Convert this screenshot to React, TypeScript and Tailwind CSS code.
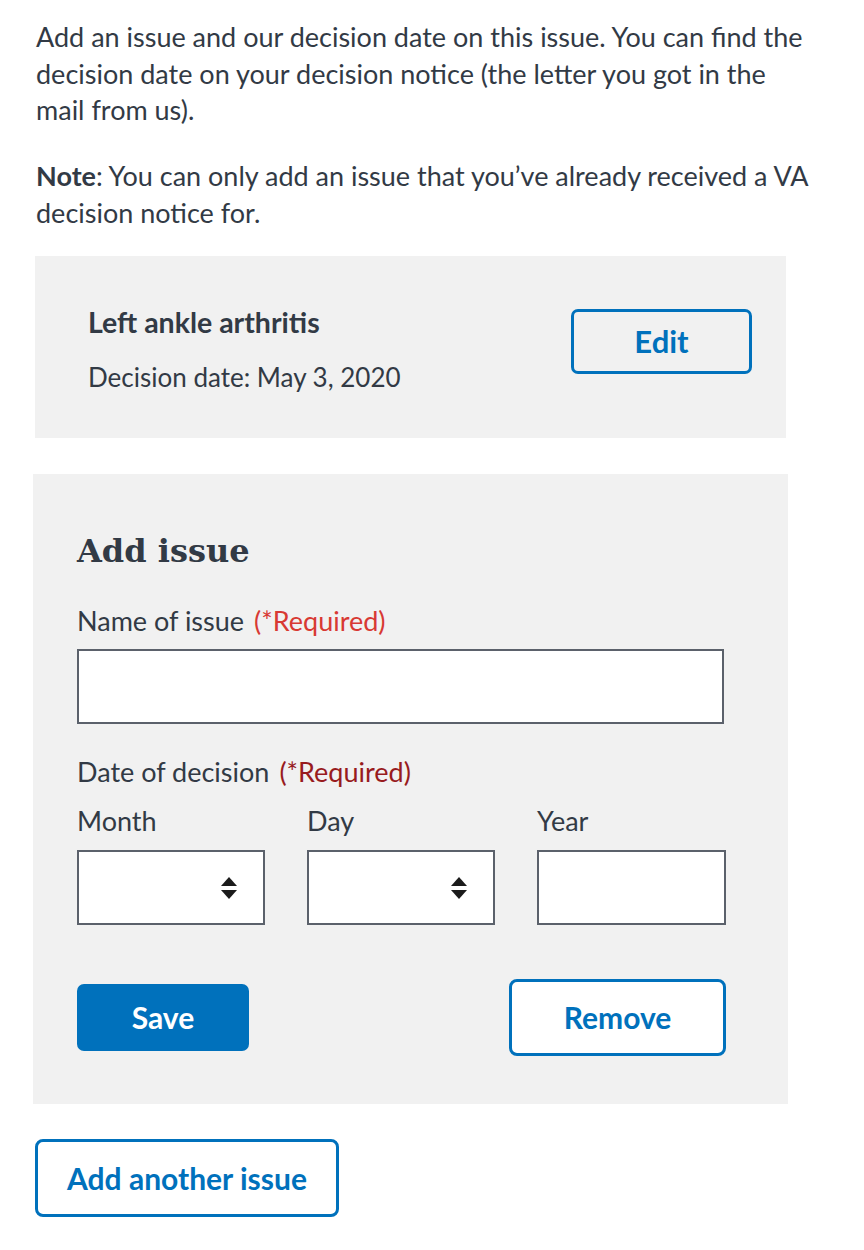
import React from "react";

const body = "font-['Lato',sans-serif] text-[#323a45]";

const SelectArrows: React.FC = () => (
  <svg
    width="18"
    height="24"
    viewBox="0 0 18 24"
    className="pointer-events-none absolute right-[27px] top-1/2 -translate-y-1/2"
  >
    <polygon points="9,1 17,10 1,10" fill="#1b1b1b" />
    <polygon points="1,14 17,14 9,23" fill="#1b1b1b" />
  </svg>
);

const DateSelect: React.FC<{ label: string }> = ({ label }) => (
  <div className="w-[188px]">
    <div className="text-[27px] leading-[36px]">{label}</div>
    <div className="relative mt-[11px]">
      <select
        aria-label={label}
        className="block h-[75px] w-full appearance-none rounded-none border-2 border-[#5b616b] bg-white"
      >
        <option value=""></option>
      </select>
      <SelectArrows />
    </div>
  </div>
);

const App: React.FC = () => {
  return (
    <div className={`${body} min-h-screen bg-white pb-10 pt-[19px]`}>
      {/* Intro */}
      <div className="ml-[36px] w-[800px] text-[27px] leading-[36.5px]">
        <p>
          Add an issue and our decision date on this issue. You can find the
          decision date on your decision notice (the letter you got in the
          <br />
          mail from us).
        </p>
        <p className="mt-[29.5px]">
          <strong className="font-bold">Note</strong>: You can only add an
          issue that you’ve already received a VA decision notice for.
        </p>
      </div>

      {/* Saved issue */}
      <div className="ml-[35px] mt-[25px] flex h-[182px] w-[751px] justify-between bg-[#f1f1f1] pl-[53px] pr-[34px]">
        <div className="pt-[51px]">
          <div className="text-[28.5px] font-bold leading-[30px]">
            Left ankle arthritis
          </div>
          <div className="mt-[22px] text-[26px] leading-[36px]">
            Decision date: May 3, 2020
          </div>
        </div>
        <div className="pt-[53px]">
          <button className="flex h-[65px] w-[181px] items-center justify-center rounded-[7px] border-[3px] border-[#0071bc] text-[31px] font-bold text-[#0071bc]">
            Edit
          </button>
        </div>
      </div>

      {/* Add issue form */}
      <div className="ml-[33px] mt-[36px] w-[755px] bg-[#f1f1f1] pb-[48px] pl-[44px] pt-[57px]">
        <h2 className="font-['DejaVu_Serif',serif] text-[32px] font-bold leading-[40px]">
          Add issue
        </h2>

        <label className="mt-[32px] block text-[27px] leading-[36px]">
          Name of issue
          <span className="ml-[10px] text-[#d83933]">(*Required)</span>
        </label>
        <input
          type="text"
          aria-label="Name of issue"
          className="mt-[10px] block h-[75px] w-[647px] border-2 border-[#5b616b] bg-white"
        />

        <div className="mt-[30px] text-[27px] leading-[36px]">
          Date of decision
          <span className="ml-[10px] text-[#981b1e]">(*Required)</span>
        </div>
        <div className="mt-[13px] flex gap-[42px]">
          <DateSelect label="Month" />
          <DateSelect label="Day" />
          <div className="w-[189px]">
            <div className="text-[27px] leading-[36px]">Year</div>
            <input
              type="text"
              aria-label="Year"
              className="mt-[11px] block h-[75px] w-full border-2 border-[#5b616b] bg-white"
            />
          </div>
        </div>

        <div className="mt-[54px] flex w-[649px] items-center justify-between">
          <button className="flex h-[67px] w-[172px] items-center justify-center rounded-[7px] bg-[#0071bc] text-[30px] font-bold text-white">
            Save
          </button>
          <button className="flex h-[77px] w-[217px] items-center justify-center rounded-[8px] border-[3px] border-[#0071bc] bg-white text-[30px] font-bold text-[#0071bc]">
            Remove
          </button>
        </div>
      </div>

      <button className="ml-[35px] mt-[35px] flex h-[78px] w-[304px] items-center justify-center rounded-[8px] border-[3px] border-[#0071bc] bg-white text-[30px] font-bold text-[#0071bc]">
        Add another issue
      </button>
    </div>
  );
};

export default App;
